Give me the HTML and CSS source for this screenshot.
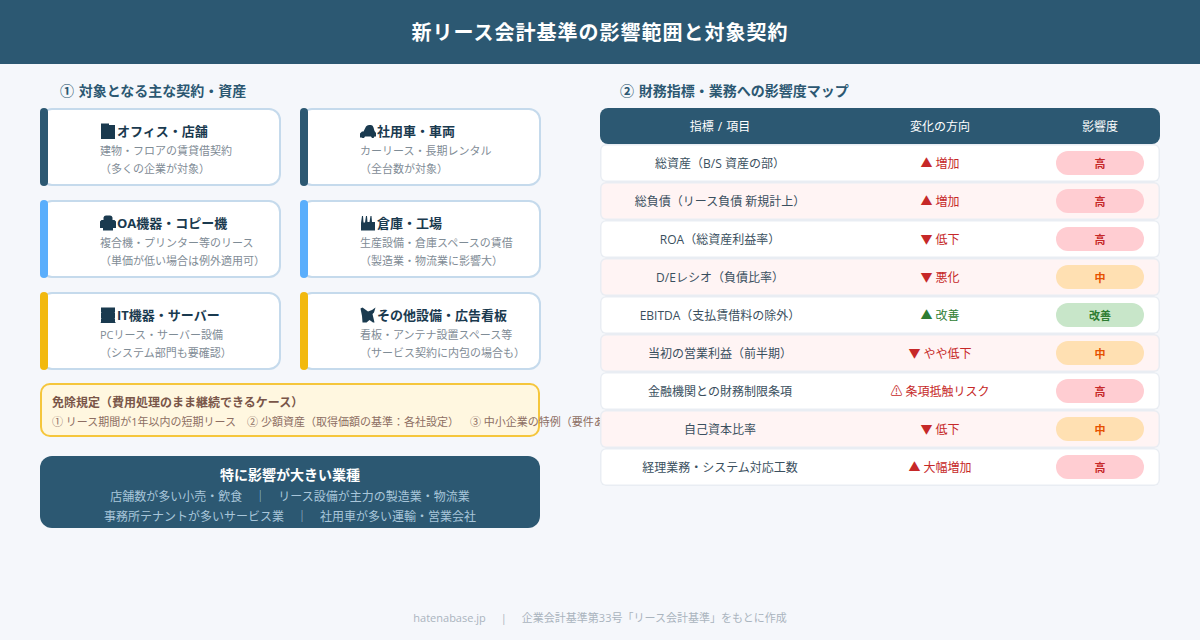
FILE: index.html
```html
<!DOCTYPE html>
<html lang="ja">
<head>
    <meta charset="UTF-8">
    <meta name="viewport" content="width=device-width, initial-scale=1.0">
    <title>新リース会計基準の影響範囲と対象契約</title>
    <link rel="stylesheet" href="styles.css">
</head>
<body>

    <header class="page-header">新リース会計基準の影響範囲と対象契約</header>

    <main class="columns">
        <section class="left-col">
            <h2 class="section-title">① 対象となる主な契約・資産</h2>

            <div class="card-grid">
                <div class="card bar-navy">
                    <div class="card-title"><svg class="icon" viewBox="0 0 16 16"><path d="M1 16V0.5H9V2H15V16Z"/></svg>オフィス・店舗</div>
                    <div class="card-text">建物・フロアの賃貸借契約<br>（多くの企業が対象）</div>
                </div>
                <div class="card bar-navy">
                    <div class="card-title"><svg class="icon" viewBox="0 0 16 16"><path d="M0 14.500V10.500L2 8.500H3.500L6 3.500Q7 2 9 2H11Q13 2 13.500 4.500L14.500 8L16 10V13.500H14.500L13.500 15H12L11 13.500H5L4 15H2.500L1.500 14.500Z"/></svg>社用車・車両</div>
                    <div class="card-text">カーリース・長期レンタル<br>（全台数が対象）</div>
                </div>
                <div class="card bar-blue">
                    <div class="card-title"><svg class="icon" viewBox="0 0 16 16"><path d="M3.500 5V2.500Q4 0.500 6 0.500H10Q12 0.500 12.500 2.500V5H14.500L16 6.500V13H13V15.500H3V13H0V6.500L1.500 5Z"/></svg>OA機器・コピー機</div>
                    <div class="card-text">複合機・プリンター等のリース<br>（単価が低い場合は例外適用可）</div>
                </div>
                <div class="card bar-blue">
                    <div class="card-title"><svg class="icon" viewBox="0 0 16 16"><path d="M1 15.500V8L2 1H3L3.500 7.500H5L6 1H7L7.500 7H9.500L10.500 1H11.500L12 7H15V15.500Z"/></svg>倉庫・工場</div>
                    <div class="card-text">生産設備・倉庫スペースの賃借<br>（製造業・物流業に影響大）</div>
                </div>
                <div class="card bar-yellow">
                    <div class="card-title"><svg class="icon" viewBox="0 0 16 16"><path d="M1 0.500H15V5L14.500 6H15V11H14.500L15 12V15L16 16H0.500L1 15V12L1.500 11H1V6H1.500L1 5Z"/></svg>IT機器・サーバー</div>
                    <div class="card-text">PCリース・サーバー設備<br>（システム部門も要確認）</div>
                </div>
                <div class="card bar-yellow">
                    <div class="card-title"><svg class="icon" viewBox="0 0 16 16"><path d="M0.500 1.500L2.500 0.500L8 4.500L12 3L15.500 0.500L14 5.500L12.500 7L14.500 15.500H13L9.500 13L6.500 15.500H2.500L2 9Z"/></svg>その他設備・広告看板</div>
                    <div class="card-text">看板・アンテナ設置スペース等<br>（サービス契約に内包の場合も）</div>
                </div>
            </div>

            <div class="exempt-box">
                <div class="exempt-title">免除規定（費用処理のまま継続できるケース）</div>
                <div class="exempt-text">
                    <span>① リース期間が1年以内の短期リース</span>
                    <span>② 少額資産（取得価額の基準：各社設定）</span>
                    <span>③ 中小企業の特例（要件あり）</span>
                </div>
            </div>

            <div class="industry-box">
                <div class="industry-title">特に影響が大きい業種</div>
                <div class="industry-text">店舗数が多い小売・飲食　｜　リース設備が主力の製造業・物流業</div>
                <div class="industry-text">事務所テナントが多いサービス業　｜　社用車が多い運輸・営業会社</div>
            </div>
        </section>

        <section class="right-col">
            <h2 class="section-title">② 財務指標・業務への影響度マップ</h2>

            <div class="impact-head">
                <div>指標 / 項目</div>
                <div>変化の方向</div>
                <div>影響度</div>
            </div>
            <div class="impact-row">
                <div>総資産（B/S 資産の部）</div>
                <div class="dir-bad">▲ 増加</div>
                <div><span class="pill pill-high">高</span></div>
            </div>
            <div class="impact-row alt">
                <div>総負債（リース負債 新規計上）</div>
                <div class="dir-bad">▲ 増加</div>
                <div><span class="pill pill-high">高</span></div>
            </div>
            <div class="impact-row">
                <div>ROA（総資産利益率）</div>
                <div class="dir-bad">▼ 低下</div>
                <div><span class="pill pill-high">高</span></div>
            </div>
            <div class="impact-row alt">
                <div>D/Eレシオ（負債比率）</div>
                <div class="dir-bad">▼ 悪化</div>
                <div><span class="pill pill-mid">中</span></div>
            </div>
            <div class="impact-row">
                <div>EBITDA（支払賃借料の除外）</div>
                <div class="dir-good">▲ 改善</div>
                <div><span class="pill pill-good">改善</span></div>
            </div>
            <div class="impact-row alt">
                <div>当初の営業利益（前半期）</div>
                <div class="dir-bad">▼ やや低下</div>
                <div><span class="pill pill-mid">中</span></div>
            </div>
            <div class="impact-row">
                <div>金融機関との財務制限条項</div>
                <div class="dir-bad">⚠ 条項抵触リスク</div>
                <div><span class="pill pill-high">高</span></div>
            </div>
            <div class="impact-row alt">
                <div>自己資本比率</div>
                <div class="dir-bad">▼ 低下</div>
                <div><span class="pill pill-mid">中</span></div>
            </div>
            <div class="impact-row">
                <div>経理業務・システム対応工数</div>
                <div class="dir-bad">▲ 大幅増加</div>
                <div><span class="pill pill-high">高</span></div>
            </div>
        </section>
    </main>

    <footer class="page-footer">hatenabase.jp<span class="footer-sep">|</span>企業会計基準第33号「リース会計基準」をもとに作成</footer>

</body>
</html>
```

FILE: styles.css
```css
* {
    box-sizing: border-box;
}

body {
    margin: 0;
    width: 1200px;
    height: 640px;
    overflow: hidden;
    display: flex;
    flex-direction: column;
    background-color: #f5f7fb;
    color: #2c5872;
    font-family: "Open Sans", "Noto Sans CJK JP", sans-serif;
}

.page-header {
    height: 64px;
    line-height: 66px;
    background-color: #2c5872;
    color: #fff;
    font-size: 20px;
    font-weight: 700;
    letter-spacing: 1px;
    text-align: center;
}

.columns {
    display: flex;
    gap: 60px;
    padding: 0 40px;
}

.left-col {
    width: 500px;
    flex: none;
}

.right-col {
    width: 560px;
    flex: none;
}

.section-title {
    height: 44px;
    margin: 0;
    padding-left: 20px;
    font-size: 14px;
    font-weight: 700;
    line-height: 53px;
    word-spacing: 1px;
}

.card-grid {
    display: grid;
    grid-template-columns: 241px 241px;
    grid-auto-rows: 78px;
    gap: 14px 19px;
}

.card {
    position: relative;
    padding: 12px 0 0 60px;
    background-color: #fff;
    border: 2px solid #c5daec;
    border-radius: 12px;
}

.card::before {
    content: "";
    position: absolute;
    left: -2px;
    top: -2px;
    bottom: -2px;
    width: 8px;
    border-radius: 4px;
}

.bar-navy::before {
    background-color: #2c5872;
}

.bar-blue::before {
    background-color: #5aaefc;
}

.bar-yellow::before {
    background-color: #f2b90f;
}

.card-title {
    margin-left: -2px;
    margin-bottom: 1px;
    color: #1a3a4f;
    font-size: 13px;
    font-weight: 700;
    line-height: 19px;
}

.icon {
    width: 16px;
    height: 16px;
    margin-right: 1px;
    vertical-align: -3px;
    fill: #1a3a4f;
}

.card-text {
    margin-left: -2px;
    color: #7f8c96;
    font-size: 11px;
    line-height: 18px;
}

.exempt-box {
    height: 54px;
    margin-top: 13px;
    padding: 8px 10px;
    background-color: #fff7e0;
    border: 2px solid #f5c63c;
    border-radius: 10px;
}

.exempt-title {
    color: #795548;
    font-size: 12px;
    font-weight: 700;
    line-height: 19px;
}

.exempt-text {
    display: flex;
    gap: 11px;
    margin-top: 1px;
    color: #8d6e63;
    font-size: 11px;
    line-height: 18px;
    white-space: nowrap;
}

.industry-box {
    height: 72px;
    margin-top: 19px;
    padding-top: 7px;
    background-color: #2c5872;
    border-radius: 12px;
    text-align: center;
}

.industry-title {
    color: #fff;
    font-size: 14px;
    font-weight: 700;
    line-height: 24px;
}

.industry-text {
    color: #a8c6da;
    font-size: 12px;
    line-height: 20px;
}

.impact-head,
.impact-row {
    display: grid;
    grid-template-columns: 240px 200px 120px;
    align-items: center;
    text-align: center;
    position: relative;
}

.impact-head {
    height: 36px;
    background-color: #2c5872;
    border-radius: 8px;
    color: #fff;
    font-size: 12px;
    word-spacing: 1px;
}

.impact-row {
    height: 38px;
    background-color: #fff;
    box-shadow: inset 0 0 0 1.5px #e9edf3;
    border-radius: 6px;
    color: #3a4f5e;
    font-size: 12px;
}

.impact-row.alt {
    background-color: #fff4f4;
}

.dir-bad {
    color: #c62828;
}

.dir-good {
    color: #2e7d32;
}

.pill {
    display: block;
    width: 88px;
    height: 24px;
    margin: 0 auto;
    border-radius: 12px;
    font-size: 11px;
    font-weight: 700;
    line-height: 26px;
}

.pill-high {
    background-color: #ffcdd2;
    color: #c62828;
}

.pill-mid {
    background-color: #ffe0b2;
    color: #e65100;
}

.pill-good {
    background-color: #c8e6c9;
    color: #2e7d32;
}

.page-footer {
    margin-top: auto;
    padding-bottom: 14px;
    color: #aab4be;
    font-size: 11px;
    line-height: 16px;
    text-align: center;
}

.footer-sep {
    margin: 0 15px;
}
```
